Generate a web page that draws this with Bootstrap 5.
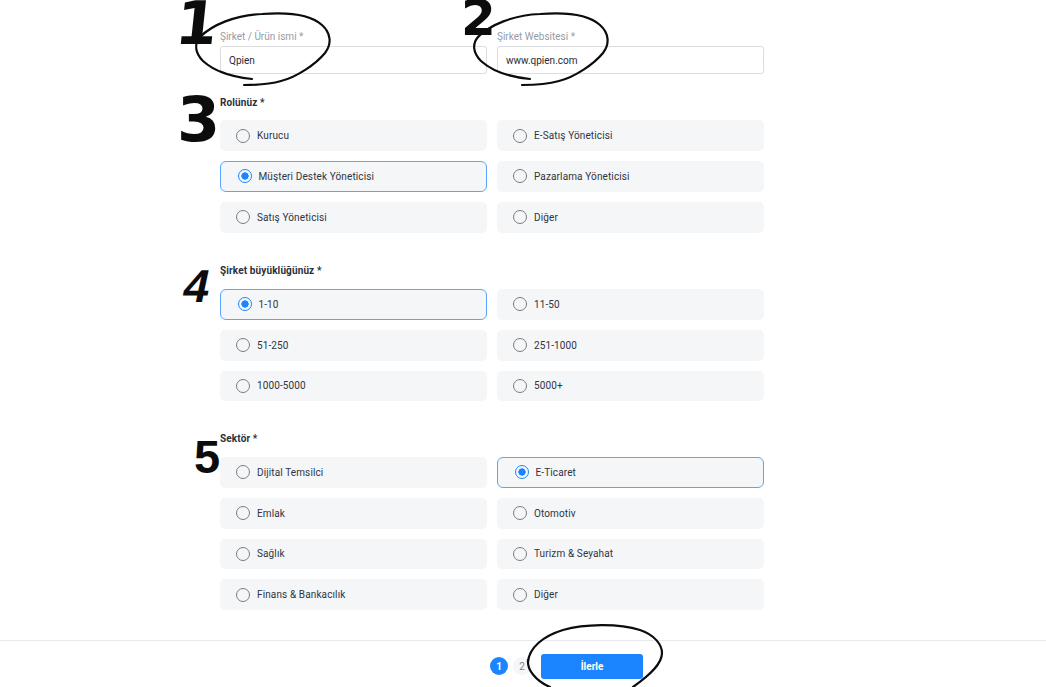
<!DOCTYPE html>
<html lang="tr">
<head>
<meta charset="utf-8">
<title>Qpien</title>
<link href="https://cdn.jsdelivr.net/npm/bootstrap@5.3.0/dist/css/bootstrap.min.css" rel="stylesheet">
<style>
html,body{height:687px;overflow:hidden;background:#fff}
body{font-family:Roboto,"Liberation Sans",sans-serif;font-size:10px;color:#2f343f;position:relative}
.form-wrap{width:544px;margin-left:220px;padding-top:31px}
.two-col{display:grid;grid-template-columns:267px 267px;column-gap:10px}
.field-label{display:block;font-size:10px;line-height:12px;color:#969ba5;margin-bottom:3px}
.field-input.form-control{height:28px;min-height:0;font-size:10px;line-height:12px;padding:0 8px;border:1px solid #dcdde0;border-radius:3px;color:#262b36}
.group-title{font-size:10px;line-height:12px;font-weight:700;color:#2b303b;margin:0 0 11.25px;letter-spacing:.12px}
.opt-grid{row-gap:10px}
.opt-box{display:flex;align-items:center;height:30.75px;padding-left:16px;gap:7px;background:#f5f6f8;border-radius:5px;margin:0;letter-spacing:.12px}
.opt-box.on{border:1.5px solid #5aa6ff;border-radius:6px;padding-left:16.5px}
.opt-box .form-check-input{width:14px;height:14px;margin:0;flex:none;background-color:transparent;border:1.7px solid #7d7d7d;background-image:none}
.opt-box .form-check-input:checked{border-color:#1a85ff;background-color:transparent;background-image:radial-gradient(circle,#1a85ff 0,#1a85ff 3.4px,transparent 3.9px)}
.sec-role{margin-top:23px}
.sec-size{margin-top:32.5px}
.sec-size .group-title,.sec-sector .group-title{margin-bottom:12px}
.sec-sector{margin-top:31.75px}
.foot-bar{position:absolute;left:0;right:0;top:640px;height:47px;border-top:1px solid #e8e9eb;display:flex;justify-content:center;padding-left:87px;padding-top:13px;gap:5px}
.step-dot{width:18px;height:18px;border-radius:50%;display:flex;align-items:center;justify-content:center;font-size:10px;margin-top:3px}
.step-dot.now{background:#1a85ff;color:#fff;font-weight:700}
.step-dot.later{background:#f5f6f8;color:#7d8189}
.next-btn.btn{width:102px;height:25px;padding:0;font-size:10px;font-weight:700;line-height:25px;background:#1a85ff;border:0;border-radius:3px;color:#fff;margin-left:5px}
.ink{position:absolute;left:0;top:0;pointer-events:none}
.hand-num{position:absolute;font-family:"DejaVu Sans",sans-serif;font-weight:700;color:#0c0c0c;line-height:.75;pointer-events:none}
.n1{left:176px;top:1px;font-size:60px;transform:skewX(-6deg)}
.n2{left:461px;top:0;font-size:50px}
.n3{left:177px;top:97px;font-size:62px}
.n4{left:184px;top:269px;transform:skewX(-12deg);font-family:"Liberation Sans",sans-serif;font-size:46px}
.n5{left:194px;top:439px;font-size:47px;font-family:"Liberation Sans",sans-serif}
</style>
</head>
<body>
<div class="form-wrap">
  <div class="two-col">
    <div><label class="field-label" for="a1">Şirket / Ürün ismi *</label><input id="a1" class="form-control field-input" value="Qpien"></div>
    <div><label class="field-label" for="a2">Şirket Websitesi *</label><input id="a2" class="form-control field-input" value="www.qpien.com"></div>
  </div>

  <div class="sec-role">
    <p class="group-title">Rolünüz *</p>
    <div class="two-col opt-grid">
      <label class="opt-box"><input class="form-check-input" type="radio" name="r">Kurucu</label>
      <label class="opt-box"><input class="form-check-input" type="radio" name="r">E-Satış Yöneticisi</label>
      <label class="opt-box on"><input class="form-check-input" type="radio" name="r" checked>Müşteri Destek Yöneticisi</label>
      <label class="opt-box"><input class="form-check-input" type="radio" name="r">Pazarlama Yöneticisi</label>
      <label class="opt-box"><input class="form-check-input" type="radio" name="r">Satış Yöneticisi</label>
      <label class="opt-box"><input class="form-check-input" type="radio" name="r">Diğer</label>
    </div>
  </div>

  <div class="sec-size">
    <p class="group-title">Şirket büyüklüğünüz *</p>
    <div class="two-col opt-grid">
      <label class="opt-box on"><input class="form-check-input" type="radio" name="s" checked>1-10</label>
      <label class="opt-box"><input class="form-check-input" type="radio" name="s">11-50</label>
      <label class="opt-box"><input class="form-check-input" type="radio" name="s">51-250</label>
      <label class="opt-box"><input class="form-check-input" type="radio" name="s">251-1000</label>
      <label class="opt-box"><input class="form-check-input" type="radio" name="s">1000-5000</label>
      <label class="opt-box"><input class="form-check-input" type="radio" name="s">5000+</label>
    </div>
  </div>

  <div class="sec-sector">
    <p class="group-title">Sektör *</p>
    <div class="two-col opt-grid">
      <label class="opt-box"><input class="form-check-input" type="radio" name="t">Dijital Temsilci</label>
      <label class="opt-box on"><input class="form-check-input" type="radio" name="t" checked>E-Ticaret</label>
      <label class="opt-box"><input class="form-check-input" type="radio" name="t">Emlak</label>
      <label class="opt-box"><input class="form-check-input" type="radio" name="t">Otomotiv</label>
      <label class="opt-box"><input class="form-check-input" type="radio" name="t">Sağlık</label>
      <label class="opt-box"><input class="form-check-input" type="radio" name="t">Turizm &amp; Seyahat</label>
      <label class="opt-box"><input class="form-check-input" type="radio" name="t">Finans &amp; Bankacılık</label>
      <label class="opt-box"><input class="form-check-input" type="radio" name="t">Diğer</label>
    </div>
  </div>
</div>

<div class="foot-bar">
  <span class="step-dot now">1</span>
  <span class="step-dot later">2</span>
  <button class="btn next-btn" type="button">İlerle</button>
</div>

<svg class="ink" width="1046" height="687" viewBox="0 0 1046 687" fill="none" stroke="#0c0c0c" stroke-linecap="round">
  <defs>
    <g id="loop">
      <path stroke-width="2.2" d="M200 37C212 25 235 15 262 14C288 12 310 14 322 25C331 33 332 44 325 53C316 64 297 77 281 81C267 85 254 85 244 85"/>
      <path stroke-width="2.2" d="M200 37C194 44 195 53 203 61C214 71 232 77 252 79"/>
    </g>
  </defs>
  <use href="#loop"/>
  <use href="#loop" transform="translate(278 0)"/>
  <path stroke-width="2.2" d="M528 662C529 648 543 636 563 630C584 624 618 623 640 630C655 635 662 645 662 653C662 664 650 675 633 687"/>
  <path stroke-width="2.2" d="M528 660C527 670 536 681 550 687"/>
</svg>
<span class="hand-num n1">1</span>
<span class="hand-num n2">2</span>
<span class="hand-num n3">3</span>
<span class="hand-num n4">4</span>
<span class="hand-num n5">5</span>
<script src="https://cdn.jsdelivr.net/npm/bootstrap@5.3.0/dist/js/bootstrap.bundle.min.js"></script>
</body>
</html>
